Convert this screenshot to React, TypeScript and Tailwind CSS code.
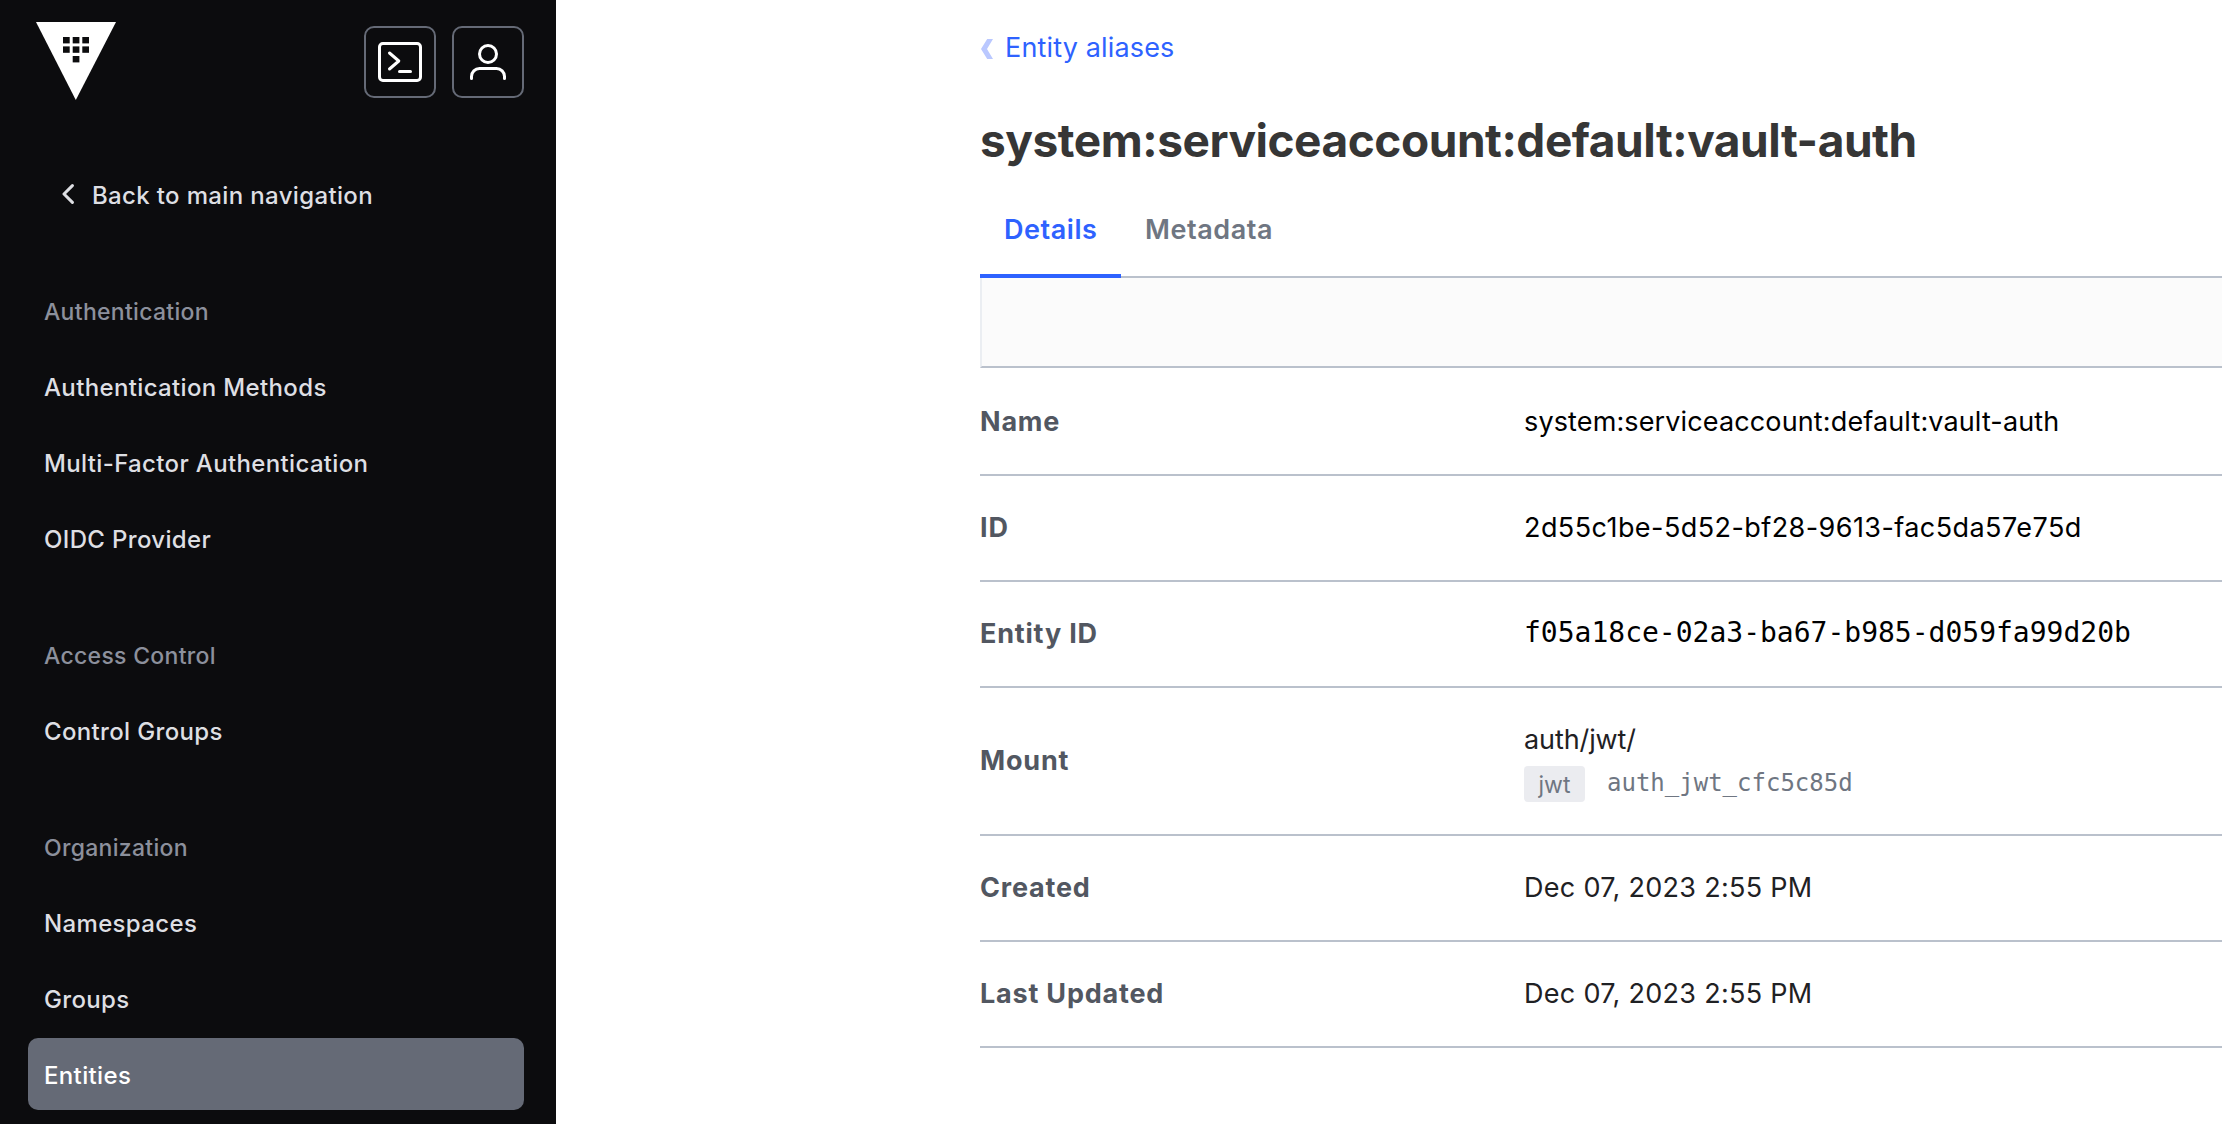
import type { ReactNode } from "react";

const sections = [
  {
    title: "Authentication",
    links: ["Authentication Methods", "Multi-Factor Authentication", "OIDC Provider"],
  },
  { title: "Access Control", links: ["Control Groups"] },
  { title: "Organization", links: ["Namespaces", "Groups", "Entities"] },
];

const activeLink = "Entities";

function VaultLogo() {
  const squares = [
    [27, 15],
    [36.7, 15],
    [46.3, 15],
    [27, 24.4],
    [36.7, 24.4],
    [46.3, 24.4],
    [36.7, 34],
  ];
  return (
    <svg width="80" height="78" viewBox="0 0 80 78" aria-label="Vault">
      <path d="M0 0H80L39.8 78Z" fill="#fff" />
      {squares.map(([x, y]) => (
        <rect key={`${x}-${y}`} x={x} y={y} width="6.7" height="6.4" fill="#0c0c0e" />
      ))}
    </svg>
  );
}

function TerminalIcon() {
  return (
    <svg width="48" height="48" viewBox="0 0 24 24" fill="none" stroke="currentColor" strokeWidth="1.5" strokeLinecap="round" strokeLinejoin="round">
      <rect x="1.75" y="2.75" width="20.5" height="18.5" rx="1.7" />
      <path d="M6.75 7.5L11.4 11.5L6.75 15.5" />
      <path d="M11.75 16.7H17.25" />
    </svg>
  );
}

function UserIcon() {
  return (
    <svg width="48" height="48" viewBox="0 0 24 24" fill="none" stroke="currentColor" strokeWidth="1.5" strokeLinecap="round" strokeLinejoin="round">
      <circle cx="12" cy="8" r="4.25" />
      <path d="M3.75 20.25V19.25A4 4 0 0 1 7.75 15.25H16.25A4 4 0 0 1 20.25 19.25V20.25" />
    </svg>
  );
}

function IconButton({ label, children }: { label: string; children: ReactNode }) {
  return (
    <button
      aria-label={label}
      className="flex size-[72px] items-center justify-center rounded-[10px] border-2 border-[#656a76] text-white"
    >
      {children}
    </button>
  );
}

function Sidebar() {
  return (
    <aside className="flex w-[556px] shrink-0 flex-col bg-[#0c0c0e] px-[28px] pr-[32px] text-[24px] font-medium tracking-[0.35px] text-[#dedfe3]">
      <header className="flex h-[124px] items-start justify-between pt-[22px] pl-2">
        <VaultLogo />
        <div className="flex gap-4 pt-1">
          <IconButton label="Console">
            <TerminalIcon />
          </IconButton>
          <IconButton label="User menu">
            <UserIcon />
          </IconButton>
        </div>
      </header>
      <a className="mt-[34px] flex h-[72px] items-center pt-[4px] pl-[34px]">
        <svg width="12" height="20" viewBox="0 0 12 20" fill="none" stroke="currentColor" strokeWidth="3" strokeLinecap="round" strokeLinejoin="round" className="-mt-[4px]">
          <path d="M10.4 1.6L2 10L10.4 18.4" />
        </svg>
        <span className="pl-[18px]">Back to main navigation</span>
      </a>
      {sections.map((section) => (
        <nav key={section.title}>
          <h2 className="h-[120px] pt-[68px] pl-4 text-[23px] leading-[28px] tracking-[0.3px] text-[#8c909c]">
            {section.title}
          </h2>
          <ul className="flex flex-col gap-1">
            {section.links.map((link) => (
              <li
                key={link}
                className={
                  link === activeLink
                    ? "flex h-[72px] items-center rounded-[10px] bg-[#656a76] pt-[4px] pl-4 text-white"
                    : "flex h-[72px] items-center pt-[4px] pl-4"
                }
              >
                {link}
              </li>
            ))}
          </ul>
        </nav>
      ))}
    </aside>
  );
}

function Row({ label, className, children }: { label: string; className: string; children: ReactNode }) {
  return (
    <div className={`flex items-center border-b-2 border-[#bac1cc] ${className}`}>
      <dt className="w-[544px] shrink-0 font-bold tracking-[0.8px] text-[#525761]">{label}</dt>
      <dd>{children}</dd>
    </div>
  );
}

export default function App() {
  return (
    <div className="flex h-[1124px] w-[2222px] overflow-hidden bg-white font-['Inter',sans-serif] text-[27px]">
      <Sidebar />
      <main className="min-w-0 flex-1 pl-[424px]">
        <a className="flex h-[94px] items-center pt-[2px] text-[#2e62ff]">
          <svg width="14" height="20" viewBox="0 0 14 20" className="mt-[2px] text-[#bac8ff]">
            <path d="M7.2 0H13L7 10L13 20H7.2L1 10Z" fill="currentColor" />
          </svg>
          <span className="pl-[11px] tracking-[0.15px]">Entity aliases</span>
        </a>
        <h1 className="flex h-[92px] items-center text-[46px] font-bold tracking-[-0.46px] text-[#363636]">
          system:serviceaccount:default:vault-auth
        </h1>
        <div className="flex h-[92px] font-semibold tracking-[0.55px] shadow-[inset_0_-2px_0_#bac1cc]">
          <div className="flex w-[141px] items-center border-b-4 border-[#2e62ff] pl-6 text-[#2e62ff]">Details</div>
          <div className="flex items-center px-6 pb-[4px] text-[#6f7682]">Metadata</div>
        </div>
        <div className="h-[90px] border-b-2 border-l-2 border-b-[#bac1cc] border-l-[#ebeef2] bg-[#fbfbfb]" />
        <dl>
          <Row label="Name" className="h-[108px] pt-[2px]">
            <span className="tracking-[0.13px] text-black">system:serviceaccount:default:vault-auth</span>
          </Row>
          <Row label="ID" className="h-[106px]">
            <span className="tracking-[0.43px] text-black">2d55c1be-5d52-bf28-9613-fac5da57e75d</span>
          </Row>
          <Row label="Entity ID" className="h-[106px]">
            <span className="block pb-[2px] font-['DejaVu_Sans_Mono',monospace] text-[28px] leading-[40px] text-black">
              f05a18ce-02a3-ba67-b985-d059fa99d20b
            </span>
          </Row>
          <Row label="Mount" className="h-[148px]">
            <div className="flex h-[146px] flex-col pt-[36px]">
              <span className="leading-[32px] tracking-[-0.1px] text-[#1f2124]">auth/jwt/</span>
              <div className="mt-[10px] flex h-9 items-center gap-[22px] text-[#6f7682]">
                <span className="flex h-9 w-[61px] items-center justify-center rounded-[4px] bg-[#ebecf0] pt-[2px] text-[23px]">jwt</span>
                <span className="-mt-[3px] font-['DejaVu_Sans_Mono',monospace] text-[24px]">auth_jwt_cfc5c85d</span>
              </div>
            </div>
          </Row>
          <Row label="Created" className="h-[106px]">
            <span className="tracking-[0.3px] text-[#1f2124]">Dec 07, 2023 2:55 PM</span>
          </Row>
          <Row label="Last Updated" className="h-[106px]">
            <span className="tracking-[0.3px] text-[#1f2124]">Dec 07, 2023 2:55 PM</span>
          </Row>
        </dl>
      </main>
    </div>
  );
}
